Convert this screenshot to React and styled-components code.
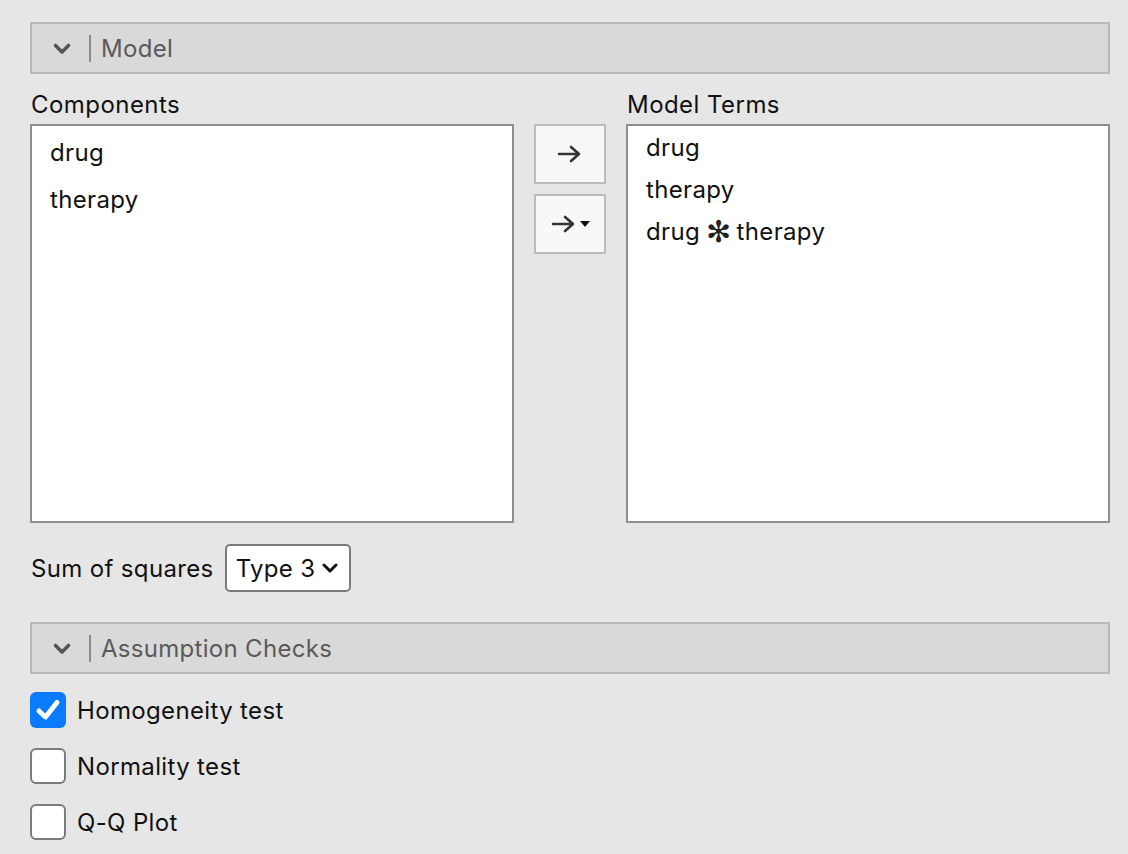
import React from "react";
import styled, { createGlobalStyle } from "styled-components";

const Global = createGlobalStyle`
  html, body { margin: 0; padding: 0; background: #e6e6e6; }
  body { font-family: Inter, "Noto Sans", sans-serif; color: #111; }
  * { box-sizing: border-box; }
`;

const Page = styled.div`
  width: 1128px;
  padding: 22px 18px 0 30px;
  display: flex;
  flex-direction: column;
`;

const SectionHeader = styled.div`
  height: 52px;
  border: 2px solid #b9b9b9;
  background: #d9d9d9;
  display: flex;
  align-items: center;
  padding-left: 20px;
`;

const Chevron = styled.svg`
  width: 20px;
  height: 20px;
  margin-right: 17px;
  margin-top: 3px;
`;

const Divider = styled.span`
  width: 2px;
  height: 27px;
  background: #8c8c8c;
  margin-right: 10px;
`;

const HeaderTitle = styled.span`
  font-size: 24px;
  letter-spacing: 0.3px;
  color: #5a5a5a;
`;

const Grid = styled.div`
  display: grid;
  grid-template-columns: 484px 72px 484px;
  column-gap: 20px;
  margin-top: 17px;
  align-items: start;
`;

const Label = styled.div`
  font-size: 24px;
  letter-spacing: 0.45px;
  line-height: 28px;
  height: 33px;
  padding-left: 1px;
`;

const Column = styled.div`
  display: flex;
  flex-direction: column;
`;

const ListBox = styled.div`
  height: 399px;
  border: 2px solid #8f8f8f;
  background: #fff;
  padding: ${(p) => p.$pad};
  display: flex;
  flex-direction: column;
  gap: ${(p) => p.$gap}px;
`;

const Item = styled.div`
  font-size: 24px;
  letter-spacing: 0.35px;
  line-height: 28px;
  height: 28px;
  padding-left: 18px;
  display: flex;
  align-items: center;
  white-space: pre;
`;

const Star = styled.span`
  font-family: "DejaVu Sans", sans-serif;
  font-size: 30px;
  line-height: 28px;
  color: #222;
  margin: 0 5px 0 6px;
`;

const Buttons = styled.div`
  display: flex;
  flex-direction: column;
  gap: 10px;
  padding-top: 33px;
`;

const ArrowButton = styled.div`
  height: 60px;
  border: 2px solid #bcbcbc;
  background: #f8f8f8;
  display: flex;
  align-items: center;
  justify-content: center;
  gap: 3px;
`;

const SelectRow = styled.div`
  display: flex;
  align-items: center;
  gap: 11px;
  margin-top: 21px;
`;

const SelectLabel = styled.span`
  font-size: 24px;
  letter-spacing: 0.35px;
  padding-left: 1px;
`;

const SelectBox = styled.div`
  width: 126px;
  height: 48px;
  border: 2px solid #7a7a7a;
  border-radius: 5px;
  background: #fff;
  display: flex;
  align-items: center;
  padding-left: 9px;
  gap: 7px;
  font-size: 24px;
  letter-spacing: 0.35px;
`;

const SecondHeader = styled(SectionHeader)`
  margin-top: 30px;
`;

const Checks = styled.div`
  display: flex;
  flex-direction: column;
  gap: 20px;
  margin-top: 18px;
`;

const CheckRow = styled.label`
  display: flex;
  align-items: center;
  gap: 11px;
  font-size: 24px;
  letter-spacing: 0.35px;
`;

const Box = styled.span`
  width: 36px;
  height: 36px;
  border-radius: 6px;
  border: ${(p) => (p.$checked ? "none" : "2px solid #7c7c7c")};
  background: ${(p) => (p.$checked ? "#0b7bfe" : "#fff")};
  display: flex;
  align-items: center;
  justify-content: center;
`;

const ChevronIcon = () => (
  <Chevron viewBox="0 0 20 20">
    <path d="M3.5 5.5 L10 12 L16.5 5.5" fill="none" stroke="#555" strokeWidth="3.6" strokeLinecap="round" strokeLinejoin="round" />
  </Chevron>
);

const Arrow = () => (
  <svg width="26" height="20" viewBox="0 0 26 20">
    <path d="M2 10 H22 M14 3 L22 10 L14 17" fill="none" stroke="#333" strokeWidth="2.6" strokeLinecap="round" strokeLinejoin="round" />
  </svg>
);

const Caret = () => (
  <svg width="10" height="8" viewBox="0 0 10 8">
    <path d="M0 1 H10 L5 7 Z" fill="#111" />
  </svg>
);

const Check = ({ checked, label }) => (
  <CheckRow>
    <Box $checked={checked}>
      {checked && (
        <svg width="28" height="28" viewBox="0 0 28 28">
          <path d="M5 15 L11.5 21 L23 6.5" fill="none" stroke="#fff" strokeWidth="5" strokeLinecap="round" strokeLinejoin="round" />
        </svg>
      )}
    </Box>
    {label}
  </CheckRow>
);

export default function App() {
  return (
    <>
      <Global />
      <Page>
        <SectionHeader>
          <ChevronIcon />
          <Divider />
          <HeaderTitle>Model</HeaderTitle>
        </SectionHeader>
        <Grid>
          <Column>
            <Label>Components</Label>
            <ListBox $pad="13px 0" $gap={19}>
              <Item>drug</Item>
              <Item>therapy</Item>
            </ListBox>
          </Column>
          <Buttons>
            <ArrowButton>
              <Arrow />
            </ArrowButton>
            <ArrowButton>
              <Arrow />
              <Caret />
            </ArrowButton>
          </Buttons>
          <Column>
            <Label>Model Terms</Label>
            <ListBox $pad="8px 0" $gap={14}>
              <Item>drug</Item>
              <Item>therapy</Item>
              <Item>
                drug<Star>✻</Star>therapy
              </Item>
            </ListBox>
          </Column>
        </Grid>
        <SelectRow>
          <SelectLabel>Sum of squares</SelectLabel>
          <SelectBox>
            Type 3
            <svg width="16" height="12" viewBox="0 0 16 12">
              <path d="M2 3 L8 9 L14 3" fill="none" stroke="#111" strokeWidth="3" strokeLinecap="round" strokeLinejoin="round" />
            </svg>
          </SelectBox>
        </SelectRow>
        <SecondHeader>
          <ChevronIcon />
          <Divider />
          <HeaderTitle>Assumption Checks</HeaderTitle>
        </SecondHeader>
        <Checks>
          <Check checked label="Homogeneity test" />
          <Check label="Normality test" />
          <Check label="Q-Q Plot" />
        </Checks>
      </Page>
    </>
  );
}
